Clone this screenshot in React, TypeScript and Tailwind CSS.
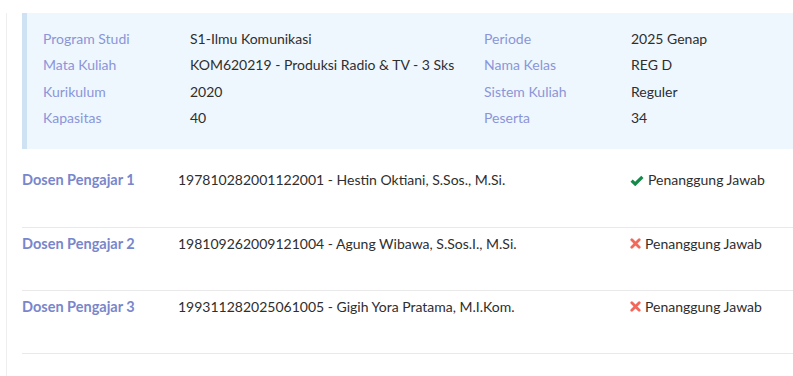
const INFO = [
  ["Program Studi", "S1-Ilmu Komunikasi", "Periode", "2025 Genap"],
  ["Mata Kuliah", "KOM620219 - Produksi Radio & TV - 3 Sks", "Nama Kelas", "REG D"],
  ["Kurikulum", "2020", "Sistem Kuliah", "Reguler"],
  ["Kapasitas", "40", "Peserta", "34"],
];

const DOSEN = [
  { label: "Dosen Pengajar 1", nama: "197810282001122001 - Hestin Oktiani, S.Sos., M.Si.", pj: true },
  { label: "Dosen Pengajar 2", nama: "198109262009121004 - Agung Wibawa, S.Sos.I., M.Si.", pj: false },
  { label: "Dosen Pengajar 3", nama: "199311282025061005 - Gigih Yora Pratama, M.I.Kom.", pj: false },
];

function CheckIcon() {
  return (
    <svg viewBox="0 0 14 11" className="w-[14px] h-[11px] mr-[4px]">
      <path d="M1.6 5.6 L5.2 9 L12.4 1.8" fill="none" stroke="#13894a" strokeWidth={3.2} strokeLinejoin="miter" />
    </svg>
  );
}

function TimesIcon() {
  return (
    <svg viewBox="0 0 11 11" className="w-[11px] h-[11px] mr-[4px]">
      <path d="M1.8 1.8 L9.2 9.2 M9.2 1.8 L1.8 9.2" fill="none" stroke="#f2685a" strokeWidth={2.8} strokeLinecap="round" />
    </svg>
  );
}

export default function App() {
  return (
    <div
      className="w-[793px] h-[376px] overflow-hidden bg-white pt-[13px] text-[14px] text-[#2e2e2e]"
      style={{ fontFamily: "Lato, 'Open Sans', sans-serif" }}
    >
      <div className="ml-[6px] border-l border-[#eeeeee] pl-[15px] h-full">
        {/* info kelas */}
        <div className="border-l-[5px] border-[#cfe2f3] bg-[#eff7fe] pl-[16px] pt-[13px] pb-[18px]">
          {INFO.map((r) => (
            <div key={r[0]} className="grid grid-cols-[147px_294px_147px_1fr] leading-[26.3px]">
              <div className="text-[#8a95d8]">{r[0]}</div>
              <div>{r[1]}</div>
              <div className="text-[#8a95d8]">{r[2]}</div>
              <div>{r[3]}</div>
            </div>
          ))}
        </div>

        {/* dosen */}
        <div className="mt-[15px]">
          {DOSEN.map((d) => (
            <div
              key={d.label}
              className="grid grid-cols-[156px_452px_1fr] pt-[6px] pb-[36.4px] leading-[20px] border-b border-[#e9e9e9]"
            >
              <div className="font-bold text-[14.5px] text-[#7986cb]">{d.label}</div>
              <div>{d.nama}</div>
              <div className="flex items-center">
                {d.pj ? <CheckIcon /> : <TimesIcon />}
                <span>Penanggung Jawab</span>
              </div>
            </div>
          ))}
        </div>
      </div>
    </div>
  );
}
